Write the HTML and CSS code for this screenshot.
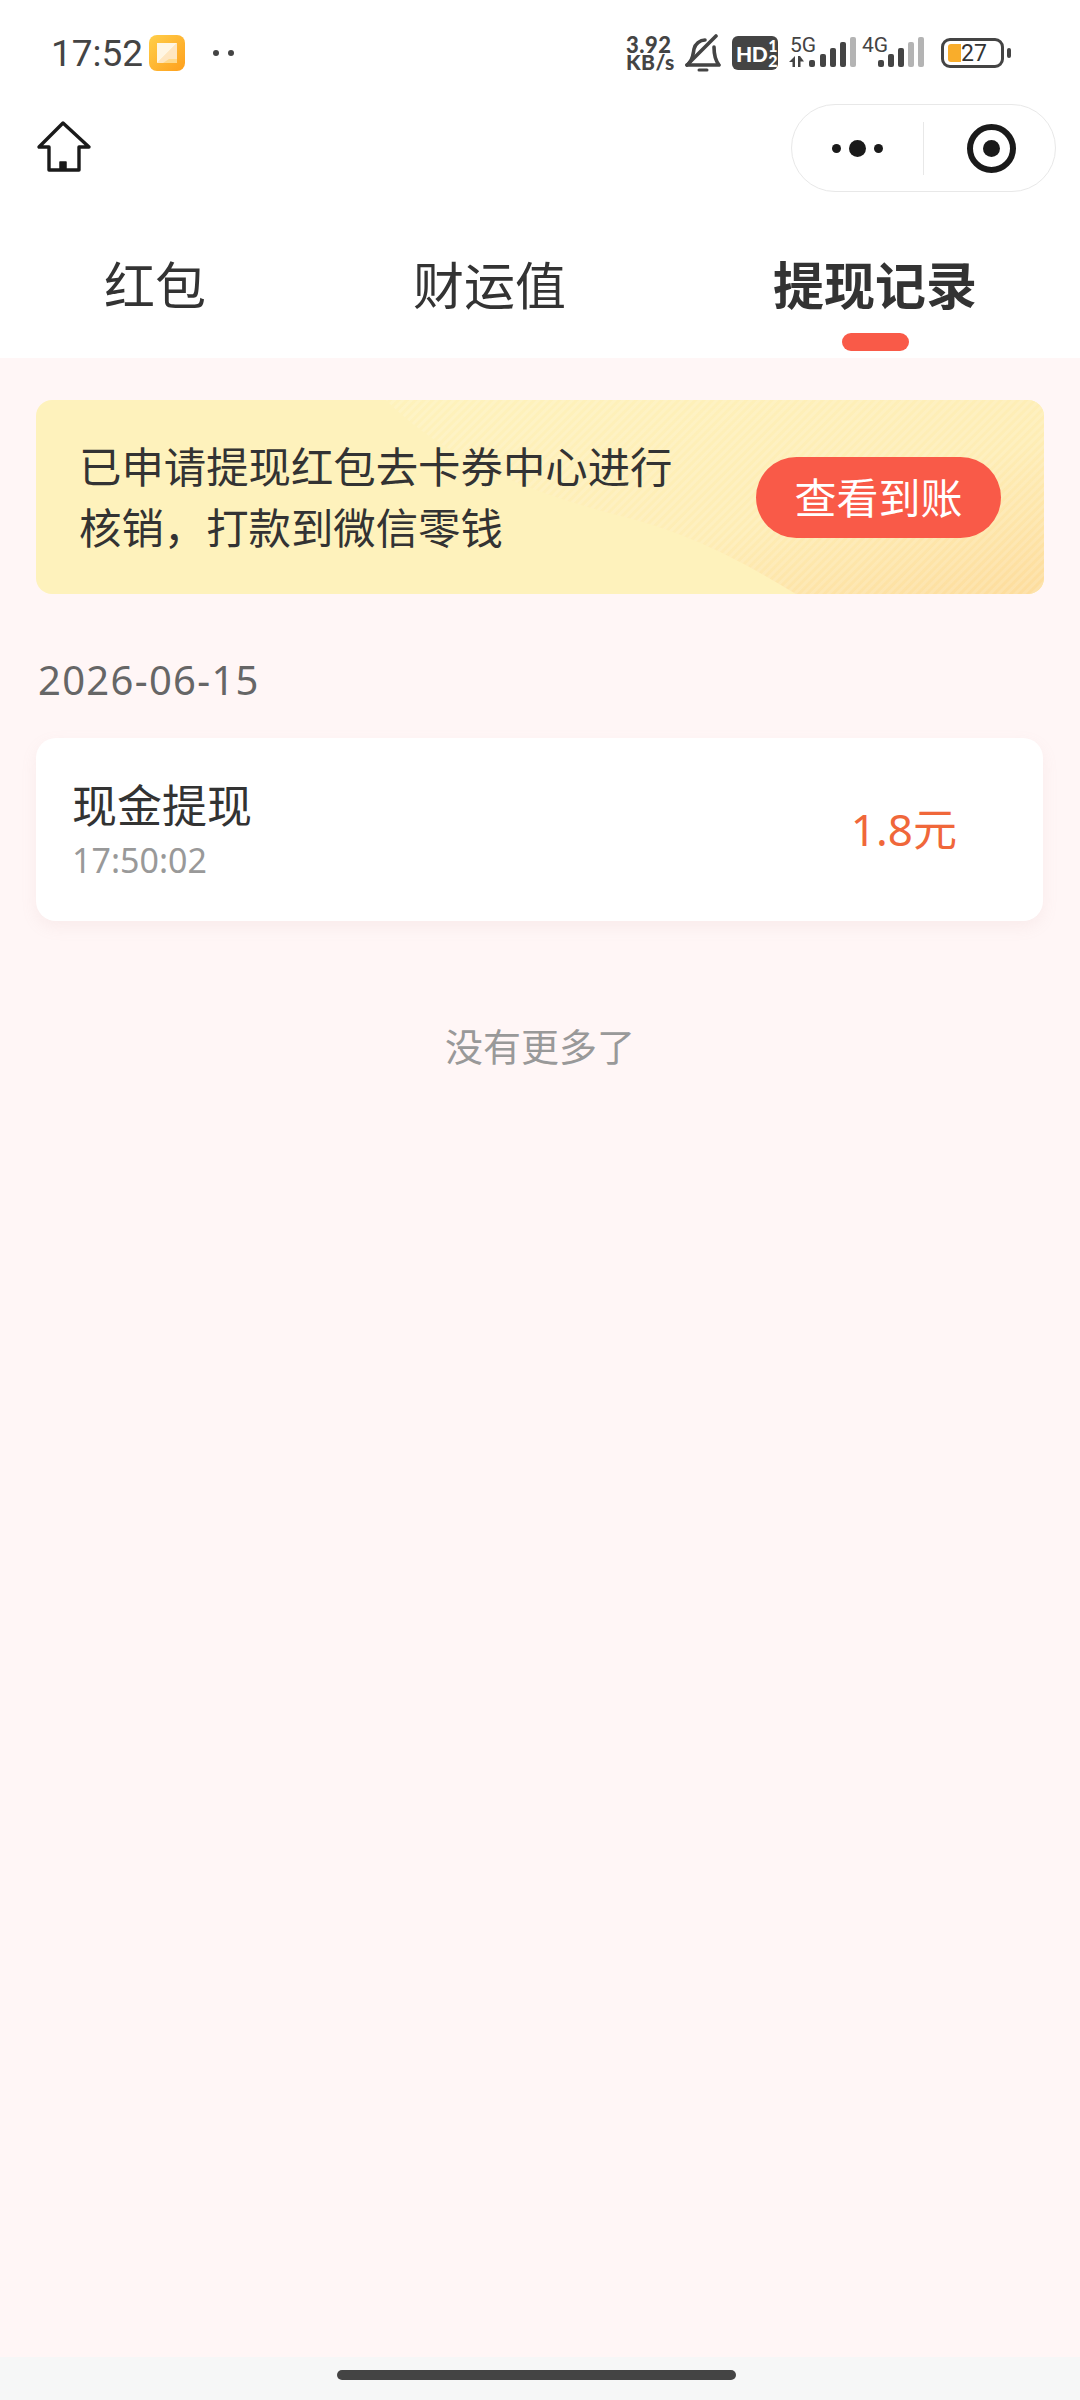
FILE: index.html
```html
<!DOCTYPE html>
<html lang="zh-CN">
<head>
    <meta charset="UTF-8">
    <meta name="viewport" content="width=device-width, initial-scale=1.0">
    <title>提现记录</title>
    <link rel="stylesheet" href="styles.css">
</head>
<body>
<div class="page">
    <!-- Status bar -->
    <div class="status-bar">
        <span class="clock">17:52</span>
        <svg class="app-icon" width="36" height="36" viewBox="0 0 36 36">
            <defs>
                <linearGradient id="appBg" x1="0" y1="0" x2="1" y2="1">
                    <stop offset="0" stop-color="#ffcf4a"/>
                    <stop offset="1" stop-color="#fe9f1c"/>
                </linearGradient>
            </defs>
            <rect width="36" height="36" rx="8" fill="url(#appBg)"/>
            <rect x="8" y="8" width="20" height="20" fill="#ffd98a"/>
            <path d="M8 28 L28 8 V24 H20 L14 28 Z" fill="#ffe6c0"/>
            <path d="M8 8 H28 L8 28 Z" fill="#fff6e4"/>
        </svg>
        <div class="notice-dots"><i></i><i></i></div>

        <div class="status-right">
            <div class="net-speed"><span>3.92</span><span>KB/s</span></div>
            <svg class="bell" width="36" height="38" viewBox="0 0 36 38" fill="none" stroke="#444" stroke-width="3.6" stroke-linecap="round" stroke-linejoin="round">
                <path d="M2 31 C8 27 8 20 9 15 C10 10 15 6 20 6"/>
                <path d="M29 13 C29 20 30 26 34 31 H2"/>
                <path d="M4 29 L31 2"/>
                <path d="M14 36 H22" stroke-width="3"/>
            </svg>
            <div class="hd-badge"><span class="hd-text">HD</span><span class="hd-frac"><b>1</b><b>2</b></span></div>
            <div class="sim">
                <span class="sim-label">5G</span>
                <svg width="68" height="32" viewBox="0 0 68 32">
                    <path d="M6 19 L0 25 H3.5 V30 H6 V19Z M9 30 V19 H11 L15 24.5 H11.5 V30Z" fill="#444"/>
                    <rect x="20" y="23" width="6" height="7" rx="2" fill="#444"/>
                    <rect x="31" y="17" width="6" height="13" rx="2" fill="#444"/>
                    <rect x="41" y="11" width="6" height="19" rx="2" fill="#444"/>
                    <rect x="51" y="5" width="6" height="25" rx="2" fill="#444"/>
                    <rect x="61" y="0" width="6" height="30" rx="2" fill="#b4b4b4"/>
                </svg>
            </div>
            <div class="sim sim-second">
                <span class="sim-label">4G</span>
                <svg width="68" height="32" viewBox="0 0 68 32">
                    <rect x="17" y="23" width="6" height="7" rx="2" fill="#444"/>
                    <rect x="27" y="17" width="6" height="13" rx="2" fill="#444"/>
                    <rect x="37" y="11" width="6" height="19" rx="2" fill="#444"/>
                    <rect x="47" y="5" width="6" height="25" rx="2" fill="#b4b4b4"/>
                    <rect x="57" y="0" width="6" height="30" rx="2" fill="#b4b4b4"/>
                </svg>
            </div>
            <div class="battery">
                <div class="battery-body"><i class="battery-level"></i><span>27</span></div>
                <i class="battery-nub"></i>
            </div>
        </div>
    </div>

    <!-- Title bar with home button and capsule -->
    <div class="nav-bar">
        <svg class="home-icon" width="56" height="56" viewBox="0 0 56 56" fill="none" stroke="#1a1a1a" stroke-width="3.4" stroke-linejoin="round" stroke-linecap="round">
            <path d="M27 3 L3 27 H13 V50 H43 V27 H53 Z"/>
            <path d="M24 50 V42 H30 V50 Z" fill="#1a1a1a" stroke-width="1.5"/>
        </svg>
        <div class="capsule">
            <div class="capsule-more"><i></i><i class="big"></i><i></i></div>
            <div class="capsule-line"></div>
            <div class="capsule-close"><i></i></div>
        </div>
    </div>

    <!-- Tabs -->
    <div class="tabs">
        <div class="tab">红包</div>
        <div class="tab">财运值</div>
        <div class="tab active">提现记录</div>
    </div>

    <div class="content">
        <div class="banner">
            <svg class="banner-bg" width="1008" height="194" viewBox="0 0 1008 194">
                <defs>
                    <linearGradient id="bandFill" x1="0" y1="0" x2="1" y2="1">
                        <stop offset="0" stop-color="#fef2bc"/>
                        <stop offset="0.6" stop-color="#feedb5"/>
                        <stop offset="1" stop-color="#fddc9c"/>
                    </linearGradient>
                    <pattern id="hatch" width="6" height="6" patternUnits="userSpaceOnUse" patternTransform="rotate(45)">
                        <rect width="3" height="6" fill="#ffffff" opacity="0.14"/>
                    </pattern>
                </defs>
                <path d="M350 0 C420 70 520 100 600 120 C670 140 720 170 760 194 H1008 V0 Z" fill="url(#bandFill)"/>
                <path d="M350 0 C420 70 520 100 600 120 C670 140 720 170 760 194 H1008 V0 Z" fill="url(#hatch)"/>
            </svg>
            <div class="banner-text">已申请提现红包去卡券中心进行<br>核销，打款到微信零钱</div>
            <div class="banner-btn">查看到账</div>
        </div>

        <div class="date-title">2026-06-15</div>

        <div class="record">
            <div class="record-left">
                <div class="record-name">现金提现</div>
                <div class="record-time">17:50:02</div>
            </div>
            <div class="record-amount">1.8元</div>
        </div>

        <div class="no-more">没有更多了</div>
    </div>

    <div class="gesture-bar"><i></i></div>
</div>
</body>
</html>
```

FILE: styles.css
```css
* {
    box-sizing: border-box;
}

body {
    margin: 0;
    background: #fff;
    font-family: "Noto Sans CJK SC", Roboto, sans-serif;
    color: #333;
}

.page {
    width: 1080px;
    height: 2400px;
    display: flex;
    flex-direction: column;
    overflow: hidden;
}

/* status bar */
.status-bar {
    height: 90px;
    padding: 16px 0 0 51px;
    display: flex;
    align-items: center;
    color: #444;
}
.clock {
    font-family: Roboto, sans-serif;
    font-size: 37px;
    width: 98px;
}
.notice-dots {
    display: flex;
    gap: 9px;
    margin-left: 28px;
}
.notice-dots i {
    width: 6px;
    height: 6px;
    border-radius: 50%;
    background: #444;
}
.status-right {
    margin-left: auto;
    width: 454px;
    display: flex;
    align-items: center;
}
.net-speed {
    width: 58px;
    display: flex;
    flex-direction: column;
    font-family: Lato, sans-serif;
    font-weight: 900;
    font-size: 21px;
    line-height: 17px;
    color: #444;
    letter-spacing: 0.5px;
}
.net-speed span:first-child {
    font-size: 22px;
}
.bell {
    margin-left: 1px;
}
.hd-badge {
    margin-left: 11px;
    width: 46px;
    height: 34px;
    border-radius: 6px;
    background: #444;
    color: #fff;
    display: flex;
    align-items: center;
    padding-left: 4px;
    font-family: Lato, sans-serif;
    font-weight: 900;
}
.hd-text {
    font-size: 21px;
    letter-spacing: -0.5px;
}
.hd-frac {
    display: flex;
    flex-direction: column;
    font-size: 16px;
    line-height: 15px;
    margin-left: 1px;
}
.hd-frac b {
    font-weight: 900;
}
.sim {
    position: relative;
    margin-left: 11px;
    width: 68px;
    height: 32px;
}
.sim-second {
    margin-left: 4px;
}
.sim-label {
    position: absolute;
    left: 1px;
    top: -3px;
    font-family: Roboto, sans-serif;
    font-size: 21px;
    line-height: 22px;
    color: #444;
}
.battery {
    margin-left: 12px;
    display: flex;
    align-items: center;
    gap: 3px;
}
.battery-body {
    width: 63px;
    height: 30px;
    border: 3px solid #444;
    border-radius: 9px;
    padding-left: 4px;
    display: flex;
    align-items: center;
    font-family: Roboto, sans-serif;
    font-size: 23px;
    color: #333;
}
.battery-level {
    width: 13px;
    height: 18px;
    border-radius: 3px 0 0 3px;
    background: #f9ad2b;
}
.battery-nub {
    width: 4px;
    height: 10px;
    border-radius: 2px;
    background: #444;
}

/* title bar */
.nav-bar {
    height: 116px;
    padding: 0 24px 0 36px;
    display: flex;
    align-items: center;
    justify-content: space-between;
}
.capsule {
    width: 265px;
    height: 88px;
    border: 1px solid #e8e8e8;
    border-radius: 44px;
    display: flex;
    align-items: center;
    background: #fff;
}
.capsule-more {
    width: 131px;
    display: flex;
    align-items: center;
    justify-content: center;
    gap: 8px;
}
.capsule-more i {
    width: 9px;
    height: 9px;
    border-radius: 50%;
    background: #1a1a1a;
}
.capsule-more i.big {
    width: 17px;
    height: 17px;
}
.capsule-line {
    width: 1px;
    height: 53px;
    background: #e8e8e8;
}
.capsule-close {
    flex: 1;
    display: flex;
    justify-content: center;
    padding-left: 3px;
}
.capsule-close i {
    width: 49px;
    height: 49px;
    border: 6px solid #1a1a1a;
    border-radius: 50%;
    display: flex;
    align-items: center;
    justify-content: center;
}
.capsule-close i::after {
    content: "";
    width: 17px;
    height: 17px;
    border-radius: 50%;
    background: #1a1a1a;
}

/* tabs */
.tabs {
    height: 152px;
    padding: 0 0 0 104px;
    display: flex;
    gap: 207px;
    background: #fff;
}
.tab {
    position: relative;
    font-size: 51px;
    line-height: 72px;
    padding-top: 41px;
    color: #333;
    white-space: nowrap;
}
.tab.active {
    font-weight: 700;
}
.tab.active::after {
    content: "";
    position: absolute;
    left: 69px;
    top: 127px;
    width: 67px;
    height: 18px;
    border-radius: 9px;
    background: #f95a48;
}

.content {
    flex: 1;
    background: #fff6f6;
    padding: 42px 36px 0 36px;
}

/* notice banner */
.banner {
    position: relative;
    width: 1008px;
    height: 194px;
    border-radius: 16px;
    overflow: hidden;
    background: #fef2bc;
    padding: 0 0 5px 43px;
    display: flex;
    align-items: center;
}
.banner-bg {
    position: absolute;
    left: 0;
    top: 0;
}
.banner-text {
    position: relative;
    width: 677px;
    font-size: 42.4px;
    line-height: 61px;
    color: #333;
}
.banner-btn {
    position: relative;
    top: 3px;
    width: 245px;
    height: 81px;
    border-radius: 41px;
    background: #f95a48;
    color: #fff;
    font-size: 42px;
    text-align: center;
    line-height: 78px;
}

.date-title {
    margin: 56px 0 0 2px;
    font-family: "Noto Sans", sans-serif;
    font-size: 40px;
    letter-spacing: 1.3px;
    line-height: 60px;
    color: #666;
}

/* record row */
.record {
    width: 1007px;
    height: 183px;
    margin-top: 28px;
    padding: 0 86px 0 36px;
    border-radius: 20px;
    background: #fff;
    box-shadow: 0 6px 16px rgba(200, 150, 150, 0.1);
    display: flex;
    align-items: center;
    justify-content: space-between;
}
.record-name {
    font-size: 45px;
    line-height: 62px;
    margin-top: -2px;
    color: #333;
}
.record-time {
    font-family: "Noto Sans", sans-serif;
    font-size: 34px;
    line-height: 50px;
    color: #999;
}
.record-amount {
    font-family: "Noto Sans", "Noto Sans CJK SC", sans-serif;
    font-size: 44px;
    color: #f0673a;
    white-space: nowrap;
    margin-top: -6px;
}

.no-more {
    margin-top: 95px;
    text-align: center;
    font-size: 38px;
    line-height: 58px;
    color: #999;
}

.gesture-bar {
    height: 43px;
    background: #f6f7f7;
    padding: 13px 0 0 337px;
}
.gesture-bar i {
    display: block;
    width: 399px;
    height: 10px;
    border-radius: 5px;
    background: #444;
}
```
